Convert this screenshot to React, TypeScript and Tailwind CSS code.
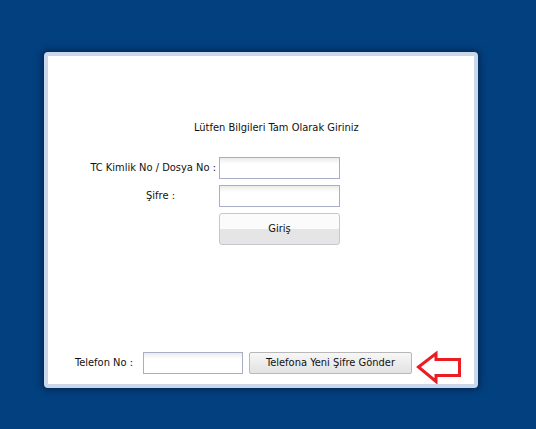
import React from "react";

const font = { fontFamily: '"DejaVu Sans Condensed", "DejaVu Sans", sans-serif' };

function TextBox({ className = "" }: { className?: string }) {
  return (
    <input
      type="text"
      className={
        "block h-[22px] border border-[#a9aec6] bg-linear-to-b from-[#ebebeb] via-white via-[30%] to-white outline-none " +
        className
      }
    />
  );
}

function Arrow() {
  return (
    <svg width="46" height="34" viewBox="0 0 46 34" className="block shrink-0">
      <polygon
        points="2.5,17 20,3.5 20,9.5 43.5,9.5 43.5,25.5 20,25.5 20,31.5"
        fill="none"
        stroke="#ec1c24"
        strokeWidth="3"
        strokeLinejoin="miter"
      />
    </svg>
  );
}

export default function App() {
  return (
    <div className="min-h-[429px] w-[536px] bg-[#03407f] pl-[44px] pt-[52px] text-[11px] text-[#111]" style={font}>
      <div className="flex h-[336px] w-[434px] flex-col justify-between rounded-[4px] border-4 border-[#cbd8ea] bg-white shadow-[0_0_6px_2px_rgba(0,20,50,0.55)]">
        <div className="flex flex-col pt-[65px]">
          <div className="pl-[146px] leading-[14px]">Lütfen Bilgileri Tam Olarak Giriniz</div>

          <div className="mt-[22px] ml-[38px] grid grid-cols-[131px_121px] gap-x-[2px] gap-y-[6px]">
            <div className="flex h-[22px] items-center justify-end pr-[1px]">TC Kimlik No / Dosya No :</div>
            <TextBox className="w-[121px]" />

            <div className="flex h-[22px] items-center justify-end pr-[42px]">Şifre :</div>
            <TextBox className="w-[121px]" />

            <div />
            <button className="block h-[32px] w-[121px] rounded-[3px] border border-[#c6c6ce] bg-linear-to-b from-[#fbfbfb] from-50% to-[#e5e5e5] to-50% text-[11px]">
              Giriş
            </button>
          </div>
        </div>

        <div className="flex items-start pb-[10px] pl-[27px]">
          <span className="flex h-[22px] w-[68px] items-center">Telefon No :</span>
          <TextBox className="w-[100px]" />
          <button className="ml-[6px] h-[22px] w-[163px] rounded-[2px] border border-[#b8b8b8] bg-linear-to-b from-[#f7f7f7] to-[#e2e2e2] text-[11px]">
            Telefona Yeni Şifre Gönder
          </button>
          <div className="ml-[4px] -mt-[2px] -mb-[10px]">
            <Arrow />
          </div>
        </div>
      </div>
    </div>
  );
}
